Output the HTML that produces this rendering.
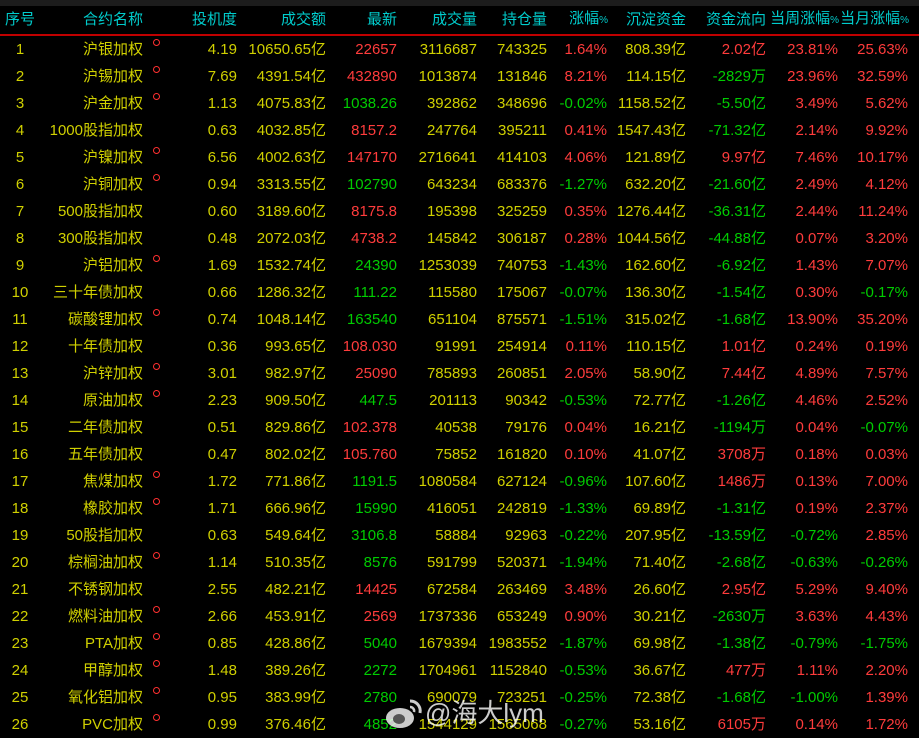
<!DOCTYPE html>
<html><head><meta charset="utf-8"><style>
body{margin:0;width:919px;height:737px;background:#000;overflow:hidden;position:relative;font-family:"Liberation Sans","Noto Sans CJK SC",sans-serif;font-size:15px}
.top{position:absolute;left:0;top:0;width:919px;height:6px;background:#1c1c1c}
table{position:absolute;left:0;top:6px;border-collapse:collapse;table-layout:fixed;width:919px}
td{padding:0;height:27px;line-height:27px;vertical-align:middle;text-align:right;white-space:nowrap;color:#d0d000;overflow:visible;font-weight:normal}
tr.h td{color:#00cccc;height:26px;line-height:26px;border-bottom:2px solid #c00000}
tr.h small{font-size:10px;letter-spacing:-1px}
td.c{text-align:center}
.r{color:#ff3c3c}.g{color:#00cc00}
.o{display:inline-block;width:5px;height:5px;border:1.5px solid #ff3030;border-radius:50%;margin-left:5px;vertical-align:8px;line-height:0}
.wm{position:absolute;left:425px;top:696px;color:rgba(255,255,255,.8);font-size:26px;line-height:34px;font-family:"Liberation Sans","Noto Sans CJK SC",sans-serif}
</style></head><body>
<div class="top"></div>
<table>
<colgroup><col style="width:40px"><col style="width:103px"><col style="width:17px"><col style="width:77px"><col style="width:89px"><col style="width:71px"><col style="width:80px"><col style="width:70px"><col style="width:60px"><col style="width:79px"><col style="width:80px"><col style="width:72px"><col style="width:70px"><col></colgroup>
<tr class="h"><td class="c">序号</td><td>合约名称</td><td></td><td>投机度</td><td>成交额</td><td>最新</td><td>成交量</td><td>持仓量</td><td>涨幅<small>%</small></td><td>沉淀资金</td><td>资金流向</td><td>当周涨幅<small>%</small></td><td>当月涨幅<small>%</small></td><td></td></tr>
<tr><td class="c">1</td><td>沪银加权</td><td><span class="o"></span></td><td>4.19</td><td>10650.65亿</td><td class="r">22657</td><td>3116687</td><td>743325</td><td class="r">1.64%</td><td>808.39亿</td><td class="r">2.02亿</td><td class="r">23.81%</td><td class="r">25.63%</td><td></td></tr>
<tr><td class="c">2</td><td>沪锡加权</td><td><span class="o"></span></td><td>7.69</td><td>4391.54亿</td><td class="r">432890</td><td>1013874</td><td>131846</td><td class="r">8.21%</td><td>114.15亿</td><td class="g">-2829万</td><td class="r">23.96%</td><td class="r">32.59%</td><td></td></tr>
<tr><td class="c">3</td><td>沪金加权</td><td><span class="o"></span></td><td>1.13</td><td>4075.83亿</td><td class="g">1038.26</td><td>392862</td><td>348696</td><td class="g">-0.02%</td><td>1158.52亿</td><td class="g">-5.50亿</td><td class="r">3.49%</td><td class="r">5.62%</td><td></td></tr>
<tr><td class="c">4</td><td>1000股指加权</td><td></td><td>0.63</td><td>4032.85亿</td><td class="r">8157.2</td><td>247764</td><td>395211</td><td class="r">0.41%</td><td>1547.43亿</td><td class="g">-71.32亿</td><td class="r">2.14%</td><td class="r">9.92%</td><td></td></tr>
<tr><td class="c">5</td><td>沪镍加权</td><td><span class="o"></span></td><td>6.56</td><td>4002.63亿</td><td class="r">147170</td><td>2716641</td><td>414103</td><td class="r">4.06%</td><td>121.89亿</td><td class="r">9.97亿</td><td class="r">7.46%</td><td class="r">10.17%</td><td></td></tr>
<tr><td class="c">6</td><td>沪铜加权</td><td><span class="o"></span></td><td>0.94</td><td>3313.55亿</td><td class="g">102790</td><td>643234</td><td>683376</td><td class="g">-1.27%</td><td>632.20亿</td><td class="g">-21.60亿</td><td class="r">2.49%</td><td class="r">4.12%</td><td></td></tr>
<tr><td class="c">7</td><td>500股指加权</td><td></td><td>0.60</td><td>3189.60亿</td><td class="r">8175.8</td><td>195398</td><td>325259</td><td class="r">0.35%</td><td>1276.44亿</td><td class="g">-36.31亿</td><td class="r">2.44%</td><td class="r">11.24%</td><td></td></tr>
<tr><td class="c">8</td><td>300股指加权</td><td></td><td>0.48</td><td>2072.03亿</td><td class="r">4738.2</td><td>145842</td><td>306187</td><td class="r">0.28%</td><td>1044.56亿</td><td class="g">-44.88亿</td><td class="r">0.07%</td><td class="r">3.20%</td><td></td></tr>
<tr><td class="c">9</td><td>沪铝加权</td><td><span class="o"></span></td><td>1.69</td><td>1532.74亿</td><td class="g">24390</td><td>1253039</td><td>740753</td><td class="g">-1.43%</td><td>162.60亿</td><td class="g">-6.92亿</td><td class="r">1.43%</td><td class="r">7.07%</td><td></td></tr>
<tr><td class="c">10</td><td>三十年债加权</td><td></td><td>0.66</td><td>1286.32亿</td><td class="g">111.22</td><td>115580</td><td>175067</td><td class="g">-0.07%</td><td>136.30亿</td><td class="g">-1.54亿</td><td class="r">0.30%</td><td class="g">-0.17%</td><td></td></tr>
<tr><td class="c">11</td><td>碳酸锂加权</td><td><span class="o"></span></td><td>0.74</td><td>1048.14亿</td><td class="g">163540</td><td>651104</td><td>875571</td><td class="g">-1.51%</td><td>315.02亿</td><td class="g">-1.68亿</td><td class="r">13.90%</td><td class="r">35.20%</td><td></td></tr>
<tr><td class="c">12</td><td>十年债加权</td><td></td><td>0.36</td><td>993.65亿</td><td class="r">108.030</td><td>91991</td><td>254914</td><td class="r">0.11%</td><td>110.15亿</td><td class="r">1.01亿</td><td class="r">0.24%</td><td class="r">0.19%</td><td></td></tr>
<tr><td class="c">13</td><td>沪锌加权</td><td><span class="o"></span></td><td>3.01</td><td>982.97亿</td><td class="r">25090</td><td>785893</td><td>260851</td><td class="r">2.05%</td><td>58.90亿</td><td class="r">7.44亿</td><td class="r">4.89%</td><td class="r">7.57%</td><td></td></tr>
<tr><td class="c">14</td><td>原油加权</td><td><span class="o"></span></td><td>2.23</td><td>909.50亿</td><td class="g">447.5</td><td>201113</td><td>90342</td><td class="g">-0.53%</td><td>72.77亿</td><td class="g">-1.26亿</td><td class="r">4.46%</td><td class="r">2.52%</td><td></td></tr>
<tr><td class="c">15</td><td>二年债加权</td><td></td><td>0.51</td><td>829.86亿</td><td class="r">102.378</td><td>40538</td><td>79176</td><td class="r">0.04%</td><td>16.21亿</td><td class="g">-1194万</td><td class="r">0.04%</td><td class="g">-0.07%</td><td></td></tr>
<tr><td class="c">16</td><td>五年债加权</td><td></td><td>0.47</td><td>802.02亿</td><td class="r">105.760</td><td>75852</td><td>161820</td><td class="r">0.10%</td><td>41.07亿</td><td class="r">3708万</td><td class="r">0.18%</td><td class="r">0.03%</td><td></td></tr>
<tr><td class="c">17</td><td>焦煤加权</td><td><span class="o"></span></td><td>1.72</td><td>771.86亿</td><td class="g">1191.5</td><td>1080584</td><td>627124</td><td class="g">-0.96%</td><td>107.60亿</td><td class="r">1486万</td><td class="r">0.13%</td><td class="r">7.00%</td><td></td></tr>
<tr><td class="c">18</td><td>橡胶加权</td><td><span class="o"></span></td><td>1.71</td><td>666.96亿</td><td class="g">15990</td><td>416051</td><td>242819</td><td class="g">-1.33%</td><td>69.89亿</td><td class="g">-1.31亿</td><td class="r">0.19%</td><td class="r">2.37%</td><td></td></tr>
<tr><td class="c">19</td><td>50股指加权</td><td></td><td>0.63</td><td>549.64亿</td><td class="g">3106.8</td><td>58884</td><td>92963</td><td class="g">-0.22%</td><td>207.95亿</td><td class="g">-13.59亿</td><td class="g">-0.72%</td><td class="r">2.85%</td><td></td></tr>
<tr><td class="c">20</td><td>棕榈油加权</td><td><span class="o"></span></td><td>1.14</td><td>510.35亿</td><td class="g">8576</td><td>591799</td><td>520371</td><td class="g">-1.94%</td><td>71.40亿</td><td class="g">-2.68亿</td><td class="g">-0.63%</td><td class="g">-0.26%</td><td></td></tr>
<tr><td class="c">21</td><td>不锈钢加权</td><td></td><td>2.55</td><td>482.21亿</td><td class="r">14425</td><td>672584</td><td>263469</td><td class="r">3.48%</td><td>26.60亿</td><td class="r">2.95亿</td><td class="r">5.29%</td><td class="r">9.40%</td><td></td></tr>
<tr><td class="c">22</td><td>燃料油加权</td><td><span class="o"></span></td><td>2.66</td><td>453.91亿</td><td class="r">2569</td><td>1737336</td><td>653249</td><td class="r">0.90%</td><td>30.21亿</td><td class="g">-2630万</td><td class="r">3.63%</td><td class="r">4.43%</td><td></td></tr>
<tr><td class="c">23</td><td>PTA加权</td><td><span class="o"></span></td><td>0.85</td><td>428.86亿</td><td class="g">5040</td><td>1679394</td><td>1983552</td><td class="g">-1.87%</td><td>69.98亿</td><td class="g">-1.38亿</td><td class="g">-0.79%</td><td class="g">-1.75%</td><td></td></tr>
<tr><td class="c">24</td><td>甲醇加权</td><td><span class="o"></span></td><td>1.48</td><td>389.26亿</td><td class="g">2272</td><td>1704961</td><td>1152840</td><td class="g">-0.53%</td><td>36.67亿</td><td class="r">477万</td><td class="r">1.11%</td><td class="r">2.20%</td><td></td></tr>
<tr><td class="c">25</td><td>氧化铝加权</td><td><span class="o"></span></td><td>0.95</td><td>383.99亿</td><td class="g">2780</td><td>690079</td><td>723251</td><td class="g">-0.25%</td><td>72.38亿</td><td class="g">-1.68亿</td><td class="g">-1.00%</td><td class="r">1.39%</td><td></td></tr>
<tr><td class="c">26</td><td>PVC加权</td><td><span class="o"></span></td><td>0.99</td><td>376.46亿</td><td class="g">4852</td><td>1544129</td><td>1565068</td><td class="g">-0.27%</td><td>53.16亿</td><td class="r">6105万</td><td class="r">0.14%</td><td class="r">1.72%</td><td></td></tr>
</table>
<svg style="position:absolute;left:384px;top:697px" width="40" height="34" viewBox="0 0 40 34"><ellipse cx="16" cy="21" rx="14" ry="10" fill="rgba(255,255,255,.8)"/><ellipse cx="15" cy="22" rx="6" ry="5" fill="#555"/><path d="M26 4a10 10 0 0 1 10 12" stroke="rgba(255,255,255,.8)" stroke-width="3" fill="none"/><path d="M26 10a4 4 0 0 1 4 5" stroke="rgba(255,255,255,.8)" stroke-width="2.5" fill="none"/></svg>
<div class="wm">@海大lym</div>
</body></html>
